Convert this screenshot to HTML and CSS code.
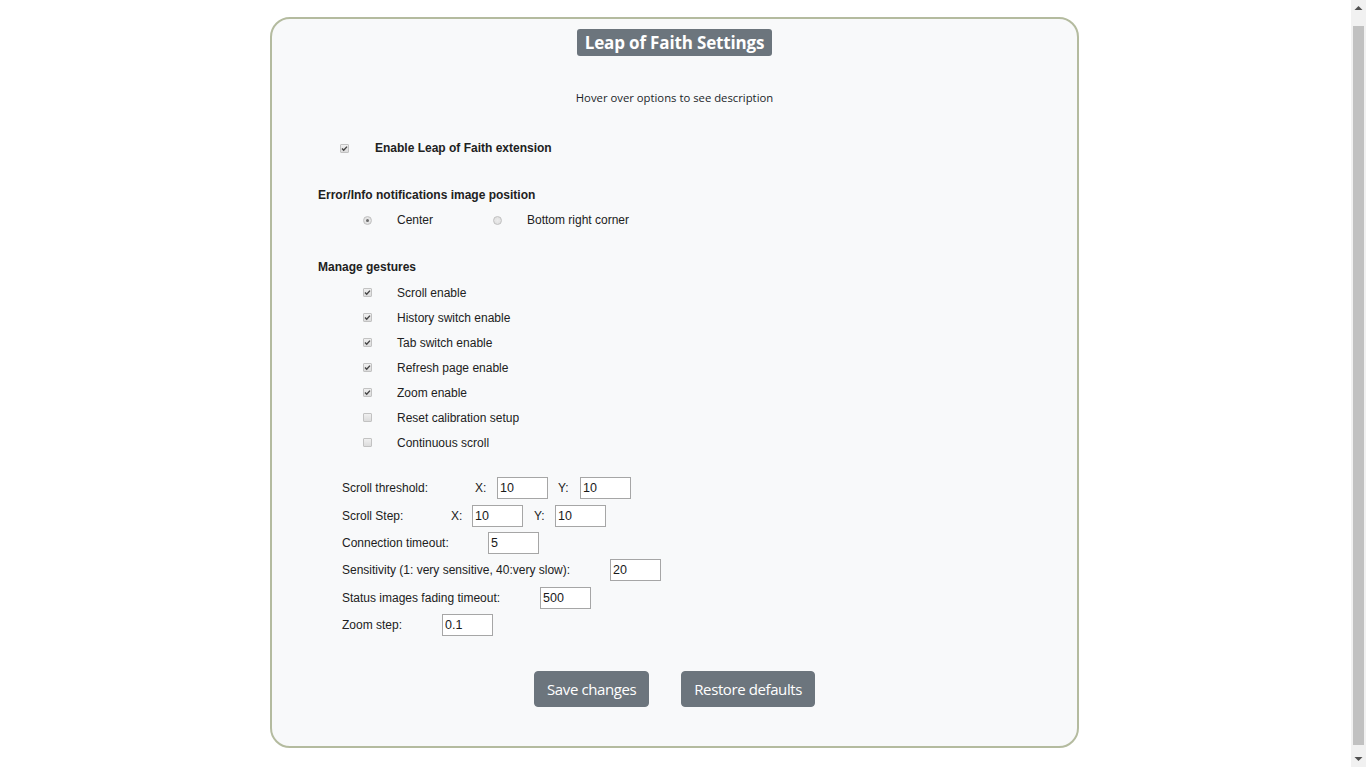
FILE: index.html
```html
<!DOCTYPE html>
<html lang="en">
<head>
<meta charset="utf-8">
<title>Leap of Faith Settings</title>
<link rel="stylesheet" href="styles.css">
</head>
<body>
<div class="page">
  <div class="card">
    <div class="title-row"><h4 class="badge">Leap of Faith Settings</h4></div>
    <p class="hint">Hover over options to see description</p>

    <div class="enable-row">
      <span class="cb checked"><svg viewBox="0 0 9 9" width="9" height="9"><path d="M2 4.6 L3.7 6.3 L7 2.6" fill="none" stroke="#444" stroke-width="1.4"/></svg></span>
      <span class="enable-label">Enable Leap of Faith extension</span>
    </div>

    <div class="heading">Error/Info notifications image position</div>
    <div class="radio-row">
      <span class="radio checked"></span><span class="radio-label first">Center</span>
      <span class="radio"></span><span class="radio-label">Bottom right corner</span>
    </div>

    <div class="heading heading-gestures">Manage gestures</div>
    <div class="gestures">
      <div class="g-row"><span class="cb checked"><svg viewBox="0 0 9 9" width="9" height="9"><path d="M2 4.6 L3.7 6.3 L7 2.6" fill="none" stroke="#444" stroke-width="1.4"/></svg></span><span class="g-label">Scroll enable</span></div>
      <div class="g-row"><span class="cb checked"><svg viewBox="0 0 9 9" width="9" height="9"><path d="M2 4.6 L3.7 6.3 L7 2.6" fill="none" stroke="#444" stroke-width="1.4"/></svg></span><span class="g-label">History switch enable</span></div>
      <div class="g-row"><span class="cb checked"><svg viewBox="0 0 9 9" width="9" height="9"><path d="M2 4.6 L3.7 6.3 L7 2.6" fill="none" stroke="#444" stroke-width="1.4"/></svg></span><span class="g-label">Tab switch enable</span></div>
      <div class="g-row"><span class="cb checked"><svg viewBox="0 0 9 9" width="9" height="9"><path d="M2 4.6 L3.7 6.3 L7 2.6" fill="none" stroke="#444" stroke-width="1.4"/></svg></span><span class="g-label">Refresh page enable</span></div>
      <div class="g-row"><span class="cb checked"><svg viewBox="0 0 9 9" width="9" height="9"><path d="M2 4.6 L3.7 6.3 L7 2.6" fill="none" stroke="#444" stroke-width="1.4"/></svg></span><span class="g-label">Zoom enable</span></div>
      <div class="g-row"><span class="cb"></span><span class="g-label">Reset calibration setup</span></div>
      <div class="g-row"><span class="cb"></span><span class="g-label">Continuous scroll</span></div>
    </div>

    <div class="fields">
      <div class="f-row">
        <span class="f-label w-threshold">Scroll threshold:</span>
        <span class="axis">X:</span><input class="num" type="text" value="10">
        <span class="axis axis-y">Y:</span><input class="num" type="text" value="10">
      </div>
      <div class="f-row">
        <span class="f-label w-step">Scroll Step:</span>
        <span class="axis axis-narrow">X:</span><input class="num" type="text" value="10">
        <span class="axis axis-y2">Y:</span><input class="num" type="text" value="10">
      </div>
      <div class="f-row">
        <span class="f-label w-conn">Connection timeout:</span><input class="num" type="text" value="5">
      </div>
      <div class="f-row">
        <span class="f-label w-sens">Sensitivity (1: very sensitive, 40:very slow):</span><input class="num" type="text" value="20">
      </div>
      <div class="f-row">
        <span class="f-label w-status">Status images fading timeout:</span><input class="num" type="text" value="500">
      </div>
      <div class="f-row">
        <span class="f-label w-zoom">Zoom step:</span><input class="num" type="text" value="0.1">
      </div>
    </div>

    <div class="buttons">
      <button class="btn" type="button">Save changes</button>
      <button class="btn" type="button">Restore defaults</button>
    </div>
  </div>
</div>
<div class="scrollbar">
  <div class="sb-arrow"><svg width="15" height="17" viewBox="0 0 15 17"><path d="M3.5 10 L7.5 6 L11.5 10 Z" fill="#505050"/></svg></div>
  <div class="sb-track"><div class="sb-thumb"></div></div>
  <div class="sb-arrow"><svg width="15" height="17" viewBox="0 0 15 17"><path d="M3.5 7 L7.5 11 L11.5 7 Z" fill="#505050"/></svg></div>
</div>
</body>
</html>
```

FILE: styles.css
```css
html, body {
  margin: 0;
  padding: 0;
  background: #ffffff;
  overflow: hidden;
}

body {
  display: flex;
}

.page {
  flex: 1;
  padding: 17px 0 0 0;
}

.scrollbar {
  width: 15px;
  height: 767px;
  flex: none;
  background: #f1f1f1;
  display: flex;
  flex-direction: column;
}

.sb-arrow {
  height: 17px;
  flex: none;
}

.sb-arrow svg {
  display: block;
}

.sb-track {
  flex: 1;
  padding: 9px 2px 5px 2px;
  display: flex;
}

.sb-thumb {
  flex: 1;
  background: #c1c1c1;
}

.card {
  box-sizing: border-box;
  width: 809px;
  height: 731px;
  margin: 0 auto;
  border: 2px solid #b4bb9f;
  border-radius: 20px;
  background: #f8f9fa;
  padding: 10px 46px 0 46px;
  font-family: "Liberation Sans", Arial, sans-serif;
  font-size: 12px;
  color: #212121;
  position: relative;
  left: -1px;
}

.title-row {
  display: flex;
  justify-content: center;
}

.badge {
  margin: 0;
  height: 27px;
  box-sizing: border-box;
  padding: 0 8px;
  display: flex;
  align-items: center;
  background: #6c757d;
  color: #ffffff;
  border-radius: 3px;
  font-family: "Open Sans", "Noto Sans", sans-serif;
  font-weight: 700;
  font-size: 17px;
  letter-spacing: -0.15px;
}

.hint {
  margin: 32px 0 0 0;
  height: 20px;
  line-height: 20px;
  text-align: center;
  font-family: "Open Sans", "Noto Sans", sans-serif;
  font-size: 11.3px;
  color: #212529;
}

.enable-row {
  margin-top: 30px;
  height: 20px;
  display: flex;
  align-items: center;
  padding-left: 22px;
}

.enable-label {
  margin-left: 26px;
  font-weight: 700;
}

.cb {
  box-sizing: border-box;
  width: 9px;
  height: 9px;
  border: 1px solid #c2c2c2;
  border-radius: 1px;
  background: linear-gradient(#f0f0f0, #dcdcdc);
  display: inline-flex;
  align-items: center;
  justify-content: center;
  flex: none;
}

.cb svg {
  display: block;
  margin: -1px;
}

.heading {
  margin-top: 27px;
  height: 20px;
  line-height: 20px;
  font-weight: 700;
}

.heading-gestures {
  margin-top: 27px;
}

.radio-row {
  margin-top: 5px;
  height: 20px;
  display: flex;
  align-items: center;
  padding-left: 45px;
}

.radio {
  box-sizing: border-box;
  width: 9px;
  height: 9px;
  border: 1px solid #c0c0c0;
  border-radius: 50%;
  background: radial-gradient(circle, #ececec 0, #dcdcdc 100%);
  display: inline-flex;
  align-items: center;
  justify-content: center;
  flex: none;
}

.radio.checked::after {
  content: "";
  width: 3px;
  height: 3px;
  border-radius: 50%;
  background: #6a6a6a;
}

.radio-label {
  margin-left: 25px;
}

.radio-label.first {
  width: 96px;
}

.gestures {
  margin-top: 3px;
  padding-left: 45px;
}

.g-row {
  height: 25px;
  display: flex;
  align-items: center;
}

.g-label {
  margin-left: 25px;
}

.fields {
  margin-top: 19.5px;
  padding-left: 24px;
}

.f-row {
  height: 27.4px;
  display: flex;
  align-items: center;
}

.f-label {
  display: inline-block;
  flex: none;
}

.w-threshold { width: 133px; }
.w-step { width: 109px; }
.w-conn { width: 146px; }
.w-sens { width: 268px; }
.w-status { width: 198px; }
.w-zoom { width: 100px; }

.axis {
  display: inline-block;
  width: 22px;
  flex: none;
}

.axis-narrow { width: 21px; }

.axis-y { margin-left: 10px; }
.axis-y2 { margin-left: 11px; width: 21px; }

.num {
  box-sizing: border-box;
  width: 51px;
  height: 22px;
  margin: 0;
  padding: 1px 2px;
  border: 1px solid #a6a6a6;
  border-radius: 0;
  background: #ffffff;
  font-family: "Liberation Sans", Arial, sans-serif;
  font-size: 12.5px;
  color: #1a1a1a;
  outline: none;
}

.buttons {
  margin-top: 32px;
  display: flex;
  justify-content: center;
  gap: 32px;
}

.btn {
  height: 36px;
  padding: 0 12px;
  border: 1px solid #6c757d;
  border-radius: 4px;
  background: #6c757d;
  color: #ffffff;
  font-family: "Open Sans", "Noto Sans", sans-serif;
  font-size: 15px;
  letter-spacing: -0.4px;
  cursor: pointer;
}
```
